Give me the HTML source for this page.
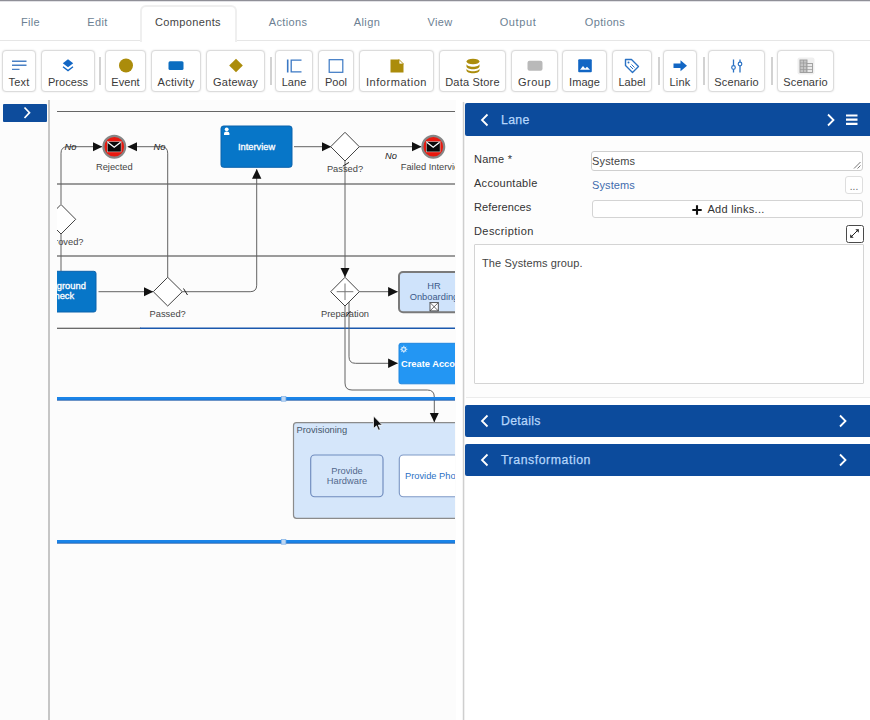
<!DOCTYPE html>
<html lang="en">
<head>
<meta charset="utf-8">
<title>Process Editor</title>
<style>
*{box-sizing:border-box;margin:0;padding:0}
html,body{width:870px;height:720px;overflow:hidden;background:#fff}
body{position:relative;font-family:"Liberation Sans",sans-serif;color:#333;font-size:12px}
.abs{position:absolute}
#topline{left:0;top:0;width:870px;height:2px;background:linear-gradient(#8f8f97 0,#8f8f97 1px,#e2e2e6 1px)}
#tabline{left:0;top:40px;width:870px;height:1px;background:#e6e6e6}
.tab{position:absolute;top:14px;height:16px;line-height:16px;font-size:11px;color:#6c7f93;white-space:nowrap;text-align:center;letter-spacing:.36px}
#tabactive{left:140px;top:5px;width:97px;height:37px;background:#fff;border:2px solid #efefef;border-bottom:none;border-radius:6px 6px 0 0}
/* toolbar */
.tb{position:absolute;top:50px;height:42px;background:#fff;border:1px solid #dcdcdc;border-radius:4px;box-shadow:0 0 2px rgba(0,0,0,.12)}
.tb span{position:absolute;left:0;right:0;top:23px;height:16px;line-height:16px;text-align:center;font-size:11px;color:#3a3a3a;white-space:nowrap;letter-spacing:.05px}
.tb svg{position:absolute;top:6.400px;left:50%;margin-left:-9px;width:18px;height:18px}
.sep{position:absolute;top:57px;width:2px;height:28px;background:#d2d2d2;margin-left:.6px}

/* left + canvas */
#leftbg{left:0;top:100px;width:464px;height:620px;background:#fcfcfc}
#lbtn{left:3px;top:104px;width:44px;height:18px;background:#0d4c9c;border-radius:1px}
#vline1{left:48px;top:100px;width:2px;height:620px;background:linear-gradient(90deg,#e2e2e2 0,#e2e2e2 .4px,#c6c6c6 .4px,#c6c6c6 1.800px,#ececec 1.800px)}
#vline2{left:462px;top:102px;width:3px;height:618px;background:linear-gradient(90deg,#f4f4f4 0,#f4f4f4 .8px,#cfcfcf .8px,#cfcfcf 2.400px,#f0f0f0 2.400px)}
#gap{left:456px;top:100px;width:7px;height:620px;background:#fff}
#canvas{left:57px;top:100px;width:398px;height:620px;overflow:hidden}
#canvas svg{position:absolute;left:0;top:0;width:398px;height:620px}
#canvas text{font-family:"Liberation Sans",sans-serif;font-size:9.3px}
#canvas text.w{stroke:#fff;stroke-width:.3px}
/* right panel */
.phead{position:absolute;left:465px;width:405px;border-radius:2px 0 0 2px;background:#0c4b9c;color:#b5d6fb;font-size:12.3px;letter-spacing:.3px}
.phead b{position:absolute;left:36px;font-weight:normal;white-space:nowrap;-webkit-text-stroke:.25px #b5d6fb}
.phead svg{position:absolute}
#pbody{left:466px;top:136px;width:404px;height:262px;background:#fdfdfd;border-bottom:1px solid #ececec}
.lbl{position:absolute;left:474px;font-size:11px;line-height:14px;color:#333;white-space:nowrap;letter-spacing:.28px}
.inp{position:absolute;background:#fff;border:1px solid #cfcfcf;border-radius:3px;font-size:11px;color:#444;white-space:nowrap;letter-spacing:.28px}
</style>
</head>
<body>
<div class="abs" id="topline"></div>
<div class="abs" id="tabline"></div>
<div class="abs" id="tabactive"></div>
<div class="tab" style="left:10px;width:41px">File</div>
<div class="tab" style="left:77px;width:41px">Edit</div>
<div class="tab" style="left:140px;width:96px;color:#444">Components</div>
<div class="tab" style="left:258px;width:60px">Actions</div>
<div class="tab" style="left:337px;width:60px">Align</div>
<div class="tab" style="left:410px;width:60px">View</div>
<div class="tab" style="left:488px;width:60px;letter-spacing:.6px">Output</div>
<div class="tab" style="left:575px;width:60px">Options</div>

<!-- TOOLBAR -->
<div id="toolbar">
<div class="tb" style="left:2px;width:34px"><svg viewBox="0 0 18 18"><path d="M2 4.300h14.500M2 8.300h14.500M2 12.400h7.500" stroke="#4a80c4" stroke-width="1.400" fill="none"/></svg><span style="letter-spacing:.2px">Text</span></div>
<div class="tb" style="left:41px;width:54px"><svg viewBox="0 0 18 18"><path d="M9 2.300l5.200 4L9 10.300 3.800 6.300z" fill="#1266c4"/><path d="M4 9.800L9 13.600l5-3.800" stroke="#1266c4" stroke-width="1.300" fill="none"/></svg><span>Process</span></div>
<div class="sep" style="left:98px"></div>
<div class="tb" style="left:105px;width:41px"><svg viewBox="0 0 18 18"><circle cx="9" cy="8.500" r="7" fill="#ab8c0b"/></svg><span>Event</span></div>
<div class="tb" style="left:151px;width:50px"><svg viewBox="0 0 18 18"><rect x="1.500" y="4.300" width="15" height="8.700" rx="1.500" fill="#0b6dc0"/></svg><span style="letter-spacing:.25px">Activity</span></div>
<div class="tb" style="left:206px;width:59px"><svg viewBox="0 0 18 18"><path d="M9 1.700l6.800 6.800L9 15.300 2.200 8.500z" fill="#ab8c0b"/></svg><span style="letter-spacing:.2px">Gateway</span></div>
<div class="sep" style="left:269px"></div>
<div class="tb" style="left:275px;width:38px"><svg viewBox="0 0 18 18"><path d="M2.700 2.500v13" stroke="#3b78c4" stroke-width="1.600" fill="none"/><path d="M16.500 3.200H6.200v11.600h10.300" stroke="#3b78c4" stroke-width="1.300" fill="none"/></svg><span>Lane</span></div>
<div class="tb" style="left:318px;width:36px"><svg viewBox="0 0 18 18"><rect x="2.200" y="2.700" width="13.600" height="12.600" fill="none" stroke="#3b78c4" stroke-width="1.200"/></svg><span>Pool</span></div>
<div class="tb" style="left:359px;width:75px"><svg viewBox="0 0 18 18"><path d="M2.500 2.500h8.500l4.500 4.500v8.500h-13z" fill="#ab8c0b"/><path d="M11 2.500v4.500h4.500z" fill="#fff" stroke="#ab8c0b" stroke-width=".8"/></svg><span style="letter-spacing:.55px">Information</span></div>
<div class="tb" style="left:439px;width:67px"><svg viewBox="0 0 18 18"><ellipse cx="9" cy="4.500" rx="6.500" ry="2.800" fill="#ab8c0b"/><path d="M2.500 7c0 1.600 2.900 2.800 6.500 2.800s6.500-1.200 6.500-2.800v2.500c0 1.600-2.900 2.800-6.500 2.800S2.500 11.100 2.500 9.500z" fill="#ab8c0b"/><path d="M2.500 11.500c0 1.600 2.900 2.800 6.500 2.800s6.500-1.200 6.500-2.800V13.500c0 1.600-2.900 2.800-6.500 2.800S2.500 15.100 2.500 13.500z" fill="#ab8c0b"/></svg><span style="letter-spacing:.2px">Data Store</span></div>
<div class="tb" style="left:511px;width:47px"><svg viewBox="0 0 18 18"><rect x="1.500" y="3.800" width="15" height="10" rx="2" fill="#b9b9b9"/></svg><span style="letter-spacing:.5px">Group</span></div>
<div class="tb" style="left:562px;width:45px"><svg viewBox="0 0 18 18"><rect x="2.200" y="2.300" width="13.600" height="13" rx="1" fill="#1266c4"/><path d="M4 12.800l3-3.800 2.200 2.400 1.800-1.600 3 3z" fill="#fff"/></svg><span>Image</span></div>
<div class="tb" style="left:612px;width:40px"><svg viewBox="0 0 18 18"><path d="M2.500 2.500h6l7 7-6 6-7-7z" fill="none" stroke="#2a72c4" stroke-width="1.400" stroke-linejoin="round"/><circle cx="5.500" cy="5.500" r="1" fill="#2a72c4"/><path d="M8.500 7.500l3 3M7 9l3 3" stroke="#2a72c4" stroke-width="1"/></svg><span>Label</span></div>
<div class="sep" style="left:657px"></div>
<div class="tb" style="left:663px;width:34px"><svg viewBox="0 0 18 18"><path d="M2.500 6.500h7V3.200L16 8.700l-6.500 5.500V11h-7z" fill="#1266c4"/></svg><span style="letter-spacing:.2px">Link</span></div>
<div class="sep" style="left:702px"></div>
<div class="tb" style="left:708px;width:57px"><svg viewBox="0 0 18 18"><path d="M5.500 2.500v6M5.500 12.500v3M12 2.500v2.500M12 9v6.500" stroke="#2a72c4" stroke-width="1.300" fill="none"/><circle cx="5.500" cy="10.500" r="1.800" fill="none" stroke="#2a72c4" stroke-width="1.200"/><circle cx="12" cy="7" r="1.800" fill="none" stroke="#2a72c4" stroke-width="1.200"/></svg><span style="letter-spacing:.12px">Scenario</span></div>
<div class="sep" style="left:770px"></div>
<div class="tb" style="left:777px;width:57px"><svg viewBox="0 0 18 18"><rect x="0.500" y="0.500" width="17" height="17" rx="2" fill="#efefef"/><rect x="3" y="3" width="7" height="12.500" fill="#c4c4c4" stroke="#9a9a9a" stroke-width=".9"/><rect x="10" y="6.500" width="5.500" height="9" fill="#e9e9e9" stroke="#9a9a9a" stroke-width=".9"/><path d="M3 6h7M3 9.500h12.500M3 12.500h12.500M6.500 3v12.500" stroke="#9a9a9a" stroke-width=".7"/></svg><span style="letter-spacing:.12px">Scenario</span></div>
</div>

<!-- LEFT / CANVAS -->
<div class="abs" id="leftbg"></div>
<div class="abs" id="vline1"></div>
<div class="abs" id="gap"></div>
<div class="abs" id="vline2"></div>
<div class="abs" id="lbtn"><svg width="44" height="18" viewBox="0 0 44 18" style="position:absolute;left:0;top:0"><path d="M21.500 3.500L26.500 8.700 21.500 14" fill="none" stroke="#fff" stroke-width="1.700"/></svg></div>
<div class="abs" id="canvas">
<svg viewBox="57 100 398 620">

<defs>
<marker id="ah" viewBox="0 0 10 10" refX="9.500" refY="5" markerWidth="10" markerHeight="10" markerUnits="userSpaceOnUse" orient="auto"><path d="M0 0.300L9.800 5 0 9.700z" fill="#111"/></marker>
</defs>
<g fill="none" stroke="#636363" stroke-width="1">
<!-- pool / lane lines -->
<path d="M57 111.500H455" stroke="#666"/>
<path d="M57 184H455M57 256H455" stroke="#3a3a3a" stroke-width="1.050"/>
<path d="M57 328.300H141" stroke="#3a3a3a" stroke-width="1.050"/>
<path d="M140 328.300H455" stroke="#1a58ad" stroke-width="1.600"/>
<!-- flows -->
<path d="M61 204V153.200q0-6.500 6.500-6.500H102" marker-end="url(#ah)"/>
<path d="M61 271V234"/>
<path d="M167.700 277.300V153.200q0-6.500-6.500-6.500H127.800" marker-end="url(#ah)"/>
<path d="M98.500 291.700H153" marker-end="url(#ah)"/>
<path d="M182.300 291.700H250.200q6.500 0 6.500-6.500V169.300" marker-end="url(#ah)"/>
<path d="M183.500 288.500l4 6.500" stroke="#222"/>
<path d="M294 146.700H331" marker-end="url(#ah)"/>
<path d="M359.300 146.700H421.300" marker-end="url(#ah)"/>
<path d="M345 161V277" marker-end="url(#ah)"/>
<path d="M342.800 166.200l6.200-3.800" stroke="#222"/>
<path d="M359.300 291.700H397.600" marker-end="url(#ah)"/>
<path d="M349 302V356.800q0 6.500 6.500 6.500H397.600" marker-end="url(#ah)"/>
<path d="M345 306V383q0 7 7 7H427.300q7 0 7 7V422" marker-end="url(#ah)"/>
<path d="M346.500 316l4-5" stroke="#222"/>
</g>
<!-- selected lane borders -->
<path d="M57 398.500H455M57 541.500H455" stroke="#1b84e8" stroke-width="3"/>
<path d="M57 400.300H455M57 543.300H455" stroke="#1a58a8" stroke-width="0.800"/>
<rect x="281.300" y="396.600" width="4.600" height="4.600" fill="#bfd7f2" stroke="#7fb0e6" stroke-width=".7"/>
<rect x="281.300" y="539.600" width="4.600" height="4.600" fill="#bfd7f2" stroke="#7fb0e6" stroke-width=".7"/>
<!-- gateways -->
<g fill="#fff" stroke="#444" stroke-width="1">
<path d="M61 204.500L75.700 219.300 61 234 46.300 219.300z"/>
<path d="M167.700 277.300L182.300 291.700 167.700 306 153.300 291.700z"/>
<path d="M345 132.300L359.300 146.700 345 161 330.700 146.700z"/>
<path d="M345 277.300L359.300 291.700 345 306 330.700 291.700z"/>
</g>
<path d="M345 283.500v16.500M336.700 291.700h16.600" stroke="#777" stroke-width="1" fill="none"/>
<!-- events -->
<g>
<circle cx="114.300" cy="146.800" r="10.900" fill="#e8190f" stroke="#868686" stroke-width="2.200"/>
<rect x="107.300" y="141.700" width="13.800" height="10.200" fill="#0a0a0a" stroke="#d8e6e6" stroke-width=".5"/>
<path d="M107.800 142.300l6.400 5 6.400-5" fill="none" stroke="#fff" stroke-width="1.300"/>
<circle cx="433.300" cy="146.800" r="10.900" fill="#e8190f" stroke="#868686" stroke-width="2.200"/>
<rect x="426.300" y="141.700" width="13.800" height="10.200" fill="#0a0a0a" stroke="#d8e6e6" stroke-width=".5"/>
<path d="M426.800 142.300l6.400 5 6.400-5" fill="none" stroke="#fff" stroke-width="1.300"/>
</g>
<!-- activities -->
<rect x="221" y="126" width="71" height="41.300" rx="2.500" fill="#0776c8" stroke="#0a62ac" stroke-width="1"/>
<path d="M224 135v-1.500q0-2 2.700-2t2.700 2V135z" fill="#fff"/><circle cx="226.700" cy="129.300" r="1.900" fill="#fff"/>
<rect x="25" y="271.300" width="71" height="40.700" rx="2.200" fill="#0776c8" stroke="#0a62ac" stroke-width="1"/>
<rect x="399" y="272" width="71" height="40.300" rx="4" fill="#cfe3fb" stroke="#7a7a7a" stroke-width="2"/>
<rect x="430" y="302.600" width="8.300" height="8.300" fill="#fff" stroke="#444" stroke-width=".9"/><path d="M430 302.600l8.300 8.300M438.300 302.600l-8.300 8.300" stroke="#444" stroke-width=".8"/>
<rect x="399" y="343.300" width="71" height="40.500" rx="2" fill="#2396f3" stroke="#1f86e0" stroke-width="1"/>
<g fill="none" stroke="#e4f1fd" stroke-width=".9"><circle cx="403.800" cy="349.300" r="2.200"/><path d="M403.800 345.700v7.200M400.200 349.300h7.200M401.300 346.800l5 5M406.300 346.800l-5 5" stroke-width=".8"/></g>
<circle cx="403.800" cy="349.300" r="1.100" fill="#2396f3"/>
<!-- provisioning group -->
<rect x="293.500" y="422.700" width="200" height="95.600" rx="3" fill="#d5e6fa" stroke="#8b8b8b" stroke-width="1.200"/>
<rect x="310.700" y="455" width="72.300" height="41.700" rx="4" fill="#d5e6fa" stroke="#6f8bbd" stroke-width="1.150"/>
<rect x="399.300" y="455" width="72" height="41.700" rx="4" fill="#fff" stroke="#7f99c6" stroke-width="1.150"/>
<!-- labels -->
<g fill="#444" text-anchor="middle">
<text x="70.500" y="150" font-style="italic" fill="#222">No</text>
<text x="159.500" y="150" font-style="italic" fill="#222">No</text>
<text x="391" y="159.300" font-style="italic" fill="#222">No</text>
<text x="114.300" y="169.500">Rejected</text>
<text x="345" y="172.300">Passed?</text>
<text x="433.300" y="169.500">Failed Interview</text>
<text x="61" y="244.800">Approved?</text>
<text x="167.700" y="317">Passed?</text>
<text x="345" y="317">Preparation</text>
<text x="256.500" y="150" fill="#fff" class="w">Interview</text>
<text x="61" y="289" fill="#fff" class="w">Background</text>
<text x="61" y="299.400" fill="#fff" class="w">Check</text>
<text x="401" y="366.600" fill="#fff" text-anchor="start" font-weight="bold">Create Account</text>
<text x="434" y="289" fill="#3d5a8a">HR</text>
<text x="434" y="299.500" fill="#3d5a8a">Onboarding</text>
<text x="347" y="473.500" fill="#52688c">Provide</text>
<text x="347" y="483.800" fill="#52688c">Hardware</text>
<text x="435.500" y="479" fill="#2b70c4">Provide Phone</text>
<text x="296.500" y="433" text-anchor="start" fill="#46566b">Provisioning</text>
</g>
<!-- cursor -->
<path d="M373.500 416v12.500l3-2.700 2 4.500 1.800-.8-2-4.400h4z" fill="#111" stroke="#fff" stroke-width=".7"/>

</svg>
</div>

<!-- RIGHT PANEL -->
<div class="abs" id="pbody"></div>
<div class="phead" style="top:103px;height:33px"><svg width="12" height="14" viewBox="0 0 12 14" style="left:14px;top:10px"><path d="M8.500 1.500L3 7l5.500 5.500" fill="none" stroke="#fff" stroke-width="1.800"/></svg><b style="top:9px;line-height:16px">Lane</b><svg width="12" height="14" viewBox="0 0 12 14" style="left:360px;top:10px"><path d="M3 1.500L8.500 7 3 12.500" fill="none" stroke="#fff" stroke-width="1.800"/></svg><svg width="12" height="12" viewBox="0 0 12 12" style="left:381px;top:11px"><path d="M0 1.500h11.500M0 5.700h11.500M0 9.900h11.500" stroke="#fff" stroke-width="2.200"/></svg></div>
<div class="lbl" style="top:152px">Name *</div>
<div class="lbl" style="top:176px">Accountable</div>
<div class="lbl" style="top:200px;letter-spacing:.12px">References</div>
<div class="lbl" style="top:224px;letter-spacing:.43px">Description</div>
<div class="inp" style="left:591px;top:151px;width:272px;height:20px;line-height:18px;padding-left:0;letter-spacing:.15px">Systems<svg width="8" height="8" viewBox="0 0 8 8" style="position:absolute;right:1px;bottom:1px"><path d="M7.500 1L1 7.500M7.500 4.500L4.500 7.500" stroke="#777" stroke-width="1"/></svg></div>
<div class="lbl" style="left:592px;top:178px;color:#3f6cae;letter-spacing:.1px">Systems</div>
<div class="inp" style="left:845px;top:176px;width:18px;height:18px;border-color:#dedede;line-height:20px;text-align:center;color:#666;letter-spacing:0;font-size:10px">...</div>
<div class="inp" style="left:592px;top:200px;width:271px;height:18px;line-height:16px;text-align:center;border-color:#d4d4d4;color:#333;padding-left:2px"><svg width="10" height="10" viewBox="0 0 10 10" style="vertical-align:-1.500px;margin-right:5px"><path d="M5 .3v9.400M.3 5h9.400" stroke="#111" stroke-width="2.100"/></svg>Add links...</div>
<div class="inp" style="left:846px;top:225px;width:18px;height:18px;border:1.500px solid #4a4a4a;border-radius:2.500px"><svg width="15" height="15" viewBox="0 0 15 15" style="position:absolute;left:0;top:0"><path d="M3.800 11.200L11.200 3.800" stroke="#222" stroke-width="1"/><path d="M8.300 3.200h3.500v3.500zM3.200 8.300v3.500h3.500z" fill="#222"/></svg></div>
<div class="inp" style="left:474px;top:244px;width:390px;height:140px;border-color:#d4d4d4;border-radius:1px;padding:11px 0 0 7px;line-height:14px;letter-spacing:.13px">The Systems group.</div>
<div class="phead" style="top:405px;height:32px"><svg width="12" height="14" viewBox="0 0 12 14" style="left:14px;top:9px"><path d="M8.500 1.500L3 7l5.500 5.500" fill="none" stroke="#fff" stroke-width="1.800"/></svg><b style="top:8px;line-height:16px">Details</b><svg width="12" height="14" viewBox="0 0 12 14" style="left:372px;top:9px"><path d="M3 1.500L8.500 7 3 12.500" fill="none" stroke="#fff" stroke-width="1.800"/></svg></div>
<div class="phead" style="top:444px;height:32px"><svg width="12" height="14" viewBox="0 0 12 14" style="left:14px;top:9px"><path d="M8.500 1.500L3 7l5.500 5.500" fill="none" stroke="#fff" stroke-width="1.800"/></svg><b style="top:8px;line-height:16px;letter-spacing:.55px">Transformation</b><svg width="12" height="14" viewBox="0 0 12 14" style="left:372px;top:9px"><path d="M3 1.500L8.500 7 3 12.500" fill="none" stroke="#fff" stroke-width="1.800"/></svg></div>

</body>
</html>
